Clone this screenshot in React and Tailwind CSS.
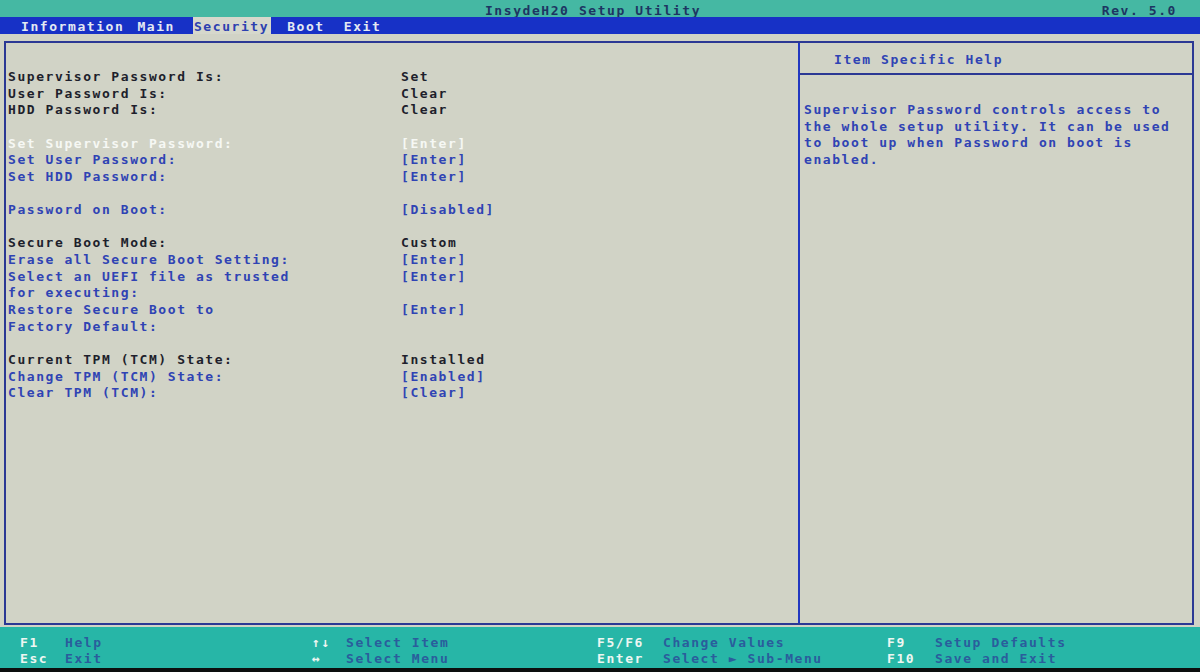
const font = { fontFamily: '"DejaVu Sans Mono", "Liberation Mono", monospace' };

const rows = [
  { label: ["Supervisor Password Is:"], value: "Set", kind: "info" },
  { label: ["User Password Is:"], value: "Clear", kind: "info" },
  { label: ["HDD Password Is:"], value: "Clear", kind: "info" },
  null,
  { label: ["Set Supervisor Password:"], value: "[Enter]", kind: "selected" },
  { label: ["Set User Password:"], value: "[Enter]", kind: "link" },
  { label: ["Set HDD Password:"], value: "[Enter]", kind: "link" },
  null,
  { label: ["Password on Boot:"], value: "[Disabled]", kind: "link" },
  null,
  { label: ["Secure Boot Mode:"], value: "Custom", kind: "info" },
  { label: ["Erase all Secure Boot Setting:"], value: "[Enter]", kind: "link" },
  { label: ["Select an UEFI file as trusted", "for executing:"], value: "[Enter]", kind: "link" },
  { label: ["Restore Secure Boot to", "Factory Default:"], value: "[Enter]", kind: "link" },
  null,
  { label: ["Current TPM (TCM) State:"], value: "Installed", kind: "info" },
  { label: ["Change TPM (TCM) State:"], value: "[Enabled]", kind: "link" },
  { label: ["Clear TPM (TCM):"], value: "[Clear]", kind: "link" },
];

const colors = {
  info: "text-[#1e1f2c]",
  link: "text-[#2f43b4]",
  selected: "text-[#f6f8f4]",
};

const help = [
  "Supervisor Password controls access to",
  "the whole setup utility. It can be used",
  "to boot up when Password on boot is",
  "enabled.",
];

function Row({ row }) {
  if (!row) return <div className="h-[16.65px]" />;
  return (
    <div className={`grid grid-cols-[393px_1fr] ${colors[row.kind]}`}>
      <div>
        {row.label.map((l) => (
          <div key={l} className="h-[16.65px] leading-[16.65px] whitespace-pre">
            {l}
          </div>
        ))}
      </div>
      <div className="h-[16.65px] leading-[16.65px] whitespace-pre">{row.value}</div>
    </div>
  );
}

function FooterLine({ items }) {
  const widths = ["w-[45px]", "w-[247px]", "w-[34px]", "w-[251px]", "w-[66px]", "w-[224px]", "w-[48px]", ""];
  return (
    <div className="flex pl-[20px] h-[16px] leading-[16px]">
      {items.map((t, i) => (
        <span
          key={i}
          className={`${widths[i]} whitespace-pre ${i % 2 === 0 ? "text-[#eef6f2]" : "text-[#2a5d9c]"}`}
        >
          {t}
        </span>
      ))}
    </div>
  );
}

export default function App() {
  return (
    <div
      className="w-[1200px] h-[672px] flex flex-col overflow-hidden bg-black text-[13px] font-bold tracking-[1.57px]"
      style={font}
    >
      {/* title bar */}
      <div className="h-[17px] bg-[#45b8a3] grid grid-cols-[1fr_auto_1fr] pt-[3px] leading-[15px] text-[#1d3562]">
        <div />
        <div className="pr-[14px]">InsydeH20 Setup Utility</div>
        <div className="text-right pr-[23px]">Rev. 5.0</div>
      </div>

      {/* menu bar */}
      <div className="h-[17px] bg-[#1731c6] flex items-stretch leading-[15px] text-[#e4e9f2] pl-[21px]">
        <span className="pt-[2px]">Information</span>
        <span className="pt-[2px] ml-[13px]">Main</span>
        <span className="pt-[2px] ml-[18px] bg-[#d6d8cc] text-[#2c40b0] pl-[1px] pr-[2px]">Security</span>
        <span className="pt-[2px] ml-[16px]">Boot</span>
        <span className="pt-[2px] ml-[19px]">Exit</span>
      </div>

      {/* main area */}
      <div className="h-[593px] bg-[#d1d3c6] pt-[7px] pl-[4px] pr-[6px] pb-[2px]">
        <div className="h-full border-2 border-[#2b3894] flex">
          <div className="w-[792px] pl-[2px] pt-[26px]">
            {rows.map((r, i) => (
              <Row key={i} row={r} />
            ))}
          </div>
          <div className="flex-1 border-l-2 border-[#2238c0] flex flex-col">
            <div className="h-[32px] border-b-2 border-[#2b3894] pt-[9px] pl-[34px] leading-[16.65px] text-[#2f43b4]">
              Item Specific Help
            </div>
            <div className="pl-[4px] pt-[27px] text-[#2f43b4]">
              {help.map((l) => (
                <div key={l} className="h-[16.65px] leading-[16.65px] whitespace-pre">
                  {l}
                </div>
              ))}
            </div>
          </div>
        </div>
      </div>

      {/* footer */}
      <div className="h-[41px] bg-[#27b6a7] pt-[8px]">
        <FooterLine items={["F1", "Help", "↑↓", "Select Item", "F5/F6", "Change Values", "F9", "Setup Defaults"]} />
        <FooterLine items={["Esc", "Exit", "↔", "Select Menu", "Enter", "Select ► Sub-Menu", "F10", "Save and Exit"]} />
      </div>
      <div className="flex-1 bg-[#0c0f0e]" />
    </div>
  );
}
